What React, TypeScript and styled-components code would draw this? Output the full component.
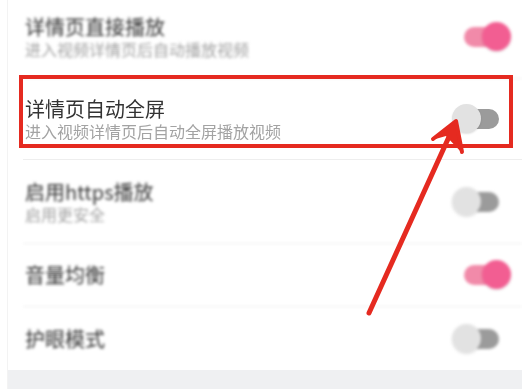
import React from "react";
import styled, { createGlobalStyle } from "styled-components";

const GlobalStyle = createGlobalStyle`
  html, body {
    margin: 0;
    padding: 0;
    background: #fff;
    overflow: hidden;
  }
  body {
    font-family: "Noto Sans CJK SC", "Noto Sans", sans-serif;
  }
`;

type Setting = {
  title: string;
  desc?: string;
  on: boolean;
  focus?: boolean;
  height: number;
};

const settings: Setting[] = [
  { title: "详情页直接播放", desc: "进入视频详情页后自动播放视频", on: true, height: 84 },
  { title: "详情页自动全屏", desc: "进入视频详情页后自动全屏播放视频", on: false, focus: true, height: 81 },
  { title: "启用https播放", desc: "启用更安全", on: false, height: 84 },
  { title: "音量均衡", on: true, height: 63 },
  { title: "护眼模式", on: false, height: 63 },
];

export default function App() {
  return (
    <>
      <GlobalStyle />
      <Page>
        <Card>
          <List>
            {settings.map((s) => (
              <Row key={s.title} $height={s.height} $focus={!!s.focus}>
                <TextBlock>
                  <Title>{s.title}</Title>
                  {s.desc && <Desc>{s.desc}</Desc>}
                </TextBlock>
                <Switch $on={s.on}>
                  <Track $on={s.on} />
                  <Knob $on={s.on} />
                </Switch>
              </Row>
            ))}
          </List>
          <Footer />
        </Card>
        <Highlight />
        <Arrow viewBox="0 0 522 389" width="522" height="389">
          <line x1="369" y1="313" x2="453" y2="128" stroke="#e52a20" strokeWidth="5" strokeLinecap="round" />
          <polygon points="456,120 432,140 446,136 462,153 459,136" fill="#e52a20" />
          <polyline points="433,139 456,121 462,152" fill="none" stroke="#e52a20" strokeWidth="4" strokeLinejoin="round" strokeLinecap="round" />
        </Arrow>
      </Page>
    </>
  );
}

const Page = styled.div`
  position: relative;
  width: 522px;
  height: 389px;
  overflow: hidden;
  background: #fff;
`;

const Card = styled.div`
  margin-left: 7px;
  height: 100%;
  display: flex;
  flex-direction: column;
  border-left: 1px solid #f3f3f3;
  background: #fff;
`;

const List = styled.div`
  margin-top: -5px;
  display: flex;
  flex-direction: column;
`;

const Row = styled.div<{ $height: number; $focus: boolean }>`
  box-sizing: border-box;
  height: ${(p) => p.$height}px;
  margin-left: 15px;
  padding-left: 2px;
  display: flex;
  align-items: center;
  justify-content: space-between;
  border-bottom: 1px solid #eeeeee;
  filter: ${(p) => (p.$focus ? "blur(0.3px)" : "blur(1.6px)")};
  &:last-child {
    border-bottom: none;
  }
`;

const TextBlock = styled.div`
  display: flex;
  flex-direction: column;
`;

const Title = styled.div`
  font-size: 20px;
  line-height: 24px;
  color: #333;
`;

const Desc = styled.div`
  font-size: 16px;
  line-height: 20px;
  color: #a3a3a3;
`;

const Switch = styled.div<{ $on: boolean }>`
  position: relative;
  width: 47px;
  height: 30px;
  margin-right: ${(p) => (p.$on ? 11 : 23)}px;
  flex-shrink: 0;
`;

const Track = styled.div<{ $on: boolean }>`
  position: absolute;
  top: 5px;
  bottom: 5px;
  left: ${(p) => (p.$on ? 0 : 4)}px;
  right: ${(p) => (p.$on ? 4 : 0)}px;
  border-radius: 10px;
  background: ${(p) => (p.$on ? "#f18aa9" : "#9b9b9b")};
`;

const Knob = styled.div<{ $on: boolean }>`
  position: absolute;
  top: 0;
  ${(p) => (p.$on ? "right: 0;" : "left: 0;")}
  width: 29px;
  height: 29px;
  border-radius: 50%;
  background: ${(p) => (p.$on ? "#f25e92" : "#e2e2e2")};
  box-shadow: 0 1px 2px rgba(0, 0, 0, 0.12);
`;

const Footer = styled.div`
  flex: 1;
  background: #eff0f2;
`;

const Highlight = styled.div`
  position: absolute;
  left: 19px;
  top: 75px;
  width: 486px;
  height: 65px;
  border: 4px solid #e52a20;
`;

const Arrow = styled.svg`
  position: absolute;
  left: 0;
  top: 0;
  pointer-events: none;
`;
